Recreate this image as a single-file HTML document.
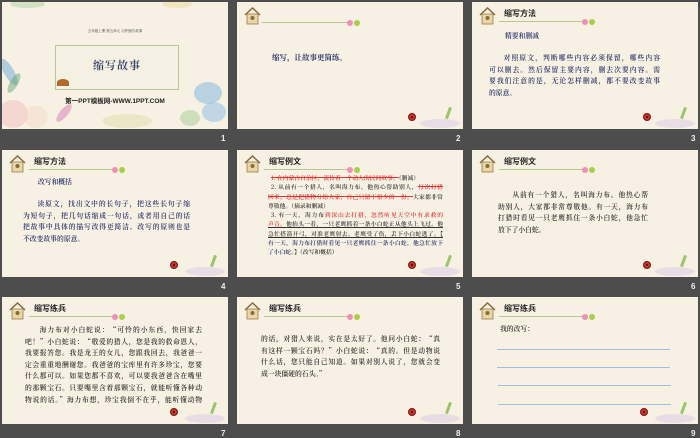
<!DOCTYPE html>
<html><head><meta charset="utf-8">
<style>
*{margin:0;padding:0;box-sizing:border-box}
body{width:700px;height:438px;background:#4d4d4d;position:relative;overflow:hidden;font-family:"Liberation Sans","Noto Serif CJK SC","Noto Sans CJK SC",serif}
.s{position:absolute;width:226px;height:127px;background:#f7f1e3;overflow:hidden}
.n{position:absolute;color:#eee;font:bold 8px "Liberation Sans",sans-serif}
.house{position:absolute;left:7px;top:5px;width:17px;height:18px}
.tt{position:absolute;left:32px;top:6px;font:bold 8px "Liberation Sans","Noto Sans CJK SC",sans-serif;color:#222;white-space:nowrap}
.ln{position:absolute;left:27px;top:19px;width:84px;height:1.2px;background:#b9c98e}
.d1{position:absolute;left:110px;top:16.5px;width:6px;height:6px;border-radius:50%;background:#ef8fb5}
.d2{position:absolute;left:117px;top:16.5px;width:6px;height:6px;border-radius:50%;background:#a9cf4a}
.bug{position:absolute;left:171px;top:111px;width:8px;height:8px;border-radius:50%;background:#c8322a;border:1px solid #7a1a14}
.bug::after{content:"";position:absolute;left:2px;top:2px;width:2px;height:2px;border-radius:50%;background:#300}
.fl{position:absolute;border-radius:50%;opacity:.45}
.dec{position:absolute;left:183px;top:117px;width:40px;height:9px;border-radius:50%;background:#ddd0e4;opacity:.6}
.dec2{position:absolute;left:210px;top:105px;width:3px;height:12px;background:#9cc46a;transform:rotate(20deg)}
.tx{position:absolute;font-size:6.8px;font-weight:600;color:#26306a;font-family:"Noto Serif CJK SC","Noto Sans CJK SC",serif}
.tx div{white-space:nowrap;text-align:justify;text-align-last:justify;height:11.6px;line-height:11.6px}
.tx div.l{text-align-last:left}
</style></head><body>

<!-- Slide 1 -->
<div class="s" style="left:2px;top:2px">
 <div class="fl" style="left:2px;top:55px;width:10px;height:30px;background:#5a9fd0;transform:rotate(-30deg)"></div>
 <div class="fl" style="left:8px;top:70px;width:8px;height:22px;background:#5aa06a;transform:rotate(30deg)"></div>
 <div class="fl" style="left:-4px;top:98px;width:30px;height:28px;background:#f0b8b8"></div>
 <div class="fl" style="left:22px;top:104px;width:24px;height:22px;background:#f0d8c8"></div>
 <div class="fl" style="left:58px;top:100px;width:8px;height:22px;background:#d070b0;transform:rotate(40deg)"></div>
 <div class="fl" style="left:100px;top:112px;width:50px;height:14px;background:#d8dca0"></div>
 <div class="fl" style="left:192px;top:80px;width:28px;height:22px;background:#6aaee0"></div>
 <div class="fl" style="left:200px;top:100px;width:24px;height:20px;background:#7ab8e6"></div>
 <div class="fl" style="left:178px;top:108px;width:20px;height:16px;background:#9cc88a"></div>
 <div class="fl" style="left:8px;top:-2px;width:35px;height:8px;background:#a8cc98"></div>
 <div class="fl" style="left:160px;top:-2px;width:30px;height:8px;background:#e8d890"></div>
 <div style="position:absolute;left:0;width:226px;top:27px;text-align:center;font-size:3.5px;color:#333">五年级上册 第五单元 习作缩写故事</div>
 <div style="position:absolute;left:53px;top:43px;width:124px;height:45px;border:1.5px solid #b8c89a;background:#f4f0e2"></div>
 <div style="position:absolute;left:53px;top:55px;width:124px;text-align:center;font:bold 11px 'Noto Serif CJK SC',serif;color:#3d4a6e;letter-spacing:1px">缩写故事</div>
 <div style="position:absolute;left:55px;top:77px;width:12px;height:7px;border-radius:50% 50% 0 0;background:#b06a2a"></div>
 <div style="position:absolute;left:0;width:226px;top:93px;text-align:center;font:bold 6.5px 'Liberation Sans','Noto Sans CJK SC',sans-serif;color:#222">第一PPT模板网-WWW.1PPT.COM</div>
</div>
<div class="n" style="left:221px;top:134px">1</div>

<!-- Slide 2 -->
<div class="s" style="left:237px;top:2px">
 <svg class="house" viewBox="0 0 17 18"><path d="M1 8 L8.5 1 L16 8" fill="none" stroke="#8a6a3a" stroke-width="1.5"/><rect x="3" y="7" width="11" height="10" fill="#e8d6a6" stroke="#9a7a4a" stroke-width=".8"/><circle cx="8.5" cy="11" r="2" fill="#8a6a3a"/></svg>
 <div class="ln" style="left:25px;top:20px;width:87px"></div><div class="d1" style="top:17.5px"></div><div class="d2" style="top:17.5px"></div>
 <div style="position:absolute;left:35px;top:50px;font:bold 7.5px 'Noto Serif CJK SC',serif;color:#26306a">缩写，让故事更简练。</div>
 <div class="bug"></div><div class="dec"></div><div class="dec2"></div>
</div>
<div class="n" style="left:456px;top:134px">2</div>

<!-- Slide 3 -->
<div class="s" style="left:472px;top:2px">
 <svg class="house" viewBox="0 0 17 18"><path d="M1 8 L8.5 1 L16 8" fill="none" stroke="#8a6a3a" stroke-width="1.5"/><rect x="3" y="7" width="11" height="10" fill="#e8d6a6" stroke="#9a7a4a" stroke-width=".8"/><circle cx="8.5" cy="11" r="2" fill="#8a6a3a"/></svg>
 <div class="tt">缩写方法</div><div class="ln"></div><div class="d1"></div><div class="d2"></div>
 <div class="tx" style="left:33px;top:28px"><div class="l">精要和删减</div></div>
 <div class="tx" style="left:17px;top:50px;width:171px">
  <div>&emsp;&emsp;对照原文，判断哪些内容必须保留，哪些内容</div>
  <div>可以删去。然后保留主要内容，删去次要内容。需</div>
  <div>要我们注意的是，无论怎样删减，都不要改变故事</div>
  <div class="l">的原意。</div>
 </div>
 <div class="bug"></div><div class="dec"></div><div class="dec2"></div>
</div>
<div class="n" style="left:691px;top:134px">3</div>

<!-- Slide 4 -->
<div class="s" style="left:2px;top:150px">
 <svg class="house" viewBox="0 0 17 18"><path d="M1 8 L8.5 1 L16 8" fill="none" stroke="#8a6a3a" stroke-width="1.5"/><rect x="3" y="7" width="11" height="10" fill="#e8d6a6" stroke="#9a7a4a" stroke-width=".8"/><circle cx="8.5" cy="11" r="2" fill="#8a6a3a"/></svg>
 <div class="tt">缩写方法</div><div class="ln"></div><div class="d1"></div><div class="d2"></div>
 <div class="tx" style="left:36px;top:26px"><div class="l">改写和概括</div></div>
 <div class="tx" style="left:21px;top:48px;width:167px">
  <div>&emsp;&emsp;读原文，找出文中的长句子，把这些长句子缩</div>
  <div>为短句子，把几句话缩成一句话，或者用自己的话</div>
  <div>把故事中具体的描写改得更简洁。改写的原则也是</div>
  <div class="l">不改变故事的原意。</div>
 </div>
 <div class="bug" style="left:168px"></div><div class="dec"></div><div class="dec2"></div>
</div>
<div class="n" style="left:221px;top:282px">4</div>

<!-- Slide 5 -->
<div class="s" style="left:237px;top:150px">
 <svg class="house" viewBox="0 0 17 18"><path d="M1 8 L8.5 1 L16 8" fill="none" stroke="#8a6a3a" stroke-width="1.5"/><rect x="3" y="7" width="11" height="10" fill="#e8d6a6" stroke="#9a7a4a" stroke-width=".8"/><circle cx="8.5" cy="11" r="2" fill="#8a6a3a"/></svg>
 <div class="tt">缩写例文</div><div class="ln"></div><div class="d1"></div><div class="d2"></div>
 <div class="tx" style="left:31px;top:23px;width:175px;font-size:5.8px;color:#333">
  <div style="height:9.3px;line-height:9.3px" class="l">&ensp;<span style="color:#d33;text-decoration:line-through">1. 在内蒙古自治区，流传着一个动人的民间故事。</span>（删减）</div>
  <div style="height:9.3px;line-height:9.3px">&ensp;2. 从前有一个猎人，名叫海力布。他热心帮助别人，<span style="color:#d33;text-decoration:line-through">每次打猎</span></div>
  <div style="height:9.3px;line-height:9.3px"><span style="color:#d33;text-decoration:line-through">回来，总是把猎物分给大家，自己只留下很少的一份。</span>大家都非常</div>
  <div style="height:9.3px;line-height:9.3px" class="l">尊敬他。（摘录和删减）</div>
  <div style="height:9.3px;line-height:9.3px">&ensp;3. 有一天，海力布<span style="color:#d33">到深山去打猎，忽然听见天空中有求救的</span></div>
  <div style="height:9.3px;line-height:9.3px;text-decoration:underline"><span style="color:#d33">声音。</span>他抬头一看，一只老鹰抓着一条小白蛇正从他头上飞过。他</div>
  <div style="height:9.3px;line-height:9.3px;text-decoration:underline">急忙搭箭开弓，对准老鹰射去。老鹰受了伤，丢下小白蛇逃了。【</div>
  <div style="height:9.3px;line-height:9.3px;color:#26306a">有一天，海力布打猎时看见一只老鹰抓住一条小白蛇，他急忙放下</div>
  <div style="height:9.3px;line-height:9.3px" class="l"><span style="color:#26306a">了小白蛇。</span>】（改写和概括）</div>
 </div>
 <div class="bug"></div><div class="dec"></div><div class="dec2"></div>
</div>
<div class="n" style="left:456px;top:282px">5</div>

<!-- Slide 6 -->
<div class="s" style="left:472px;top:150px">
 <svg class="house" viewBox="0 0 17 18"><path d="M1 8 L8.5 1 L16 8" fill="none" stroke="#8a6a3a" stroke-width="1.5"/><rect x="3" y="7" width="11" height="10" fill="#e8d6a6" stroke="#9a7a4a" stroke-width=".8"/><circle cx="8.5" cy="11" r="2" fill="#8a6a3a"/></svg>
 <div class="tt">缩写例文</div><div class="ln"></div><div class="d1"></div><div class="d2"></div>
 <div class="tx" style="left:26px;top:39px;width:150px;color:#333">
  <div>&emsp;&emsp;从前有一个猎人，名叫海力布。他热心帮</div>
  <div>助别人，大家都非常尊敬他。有一天，海力布</div>
  <div>打猎时看见一只老鹰抓住一条小白蛇，他急忙</div>
  <div class="l">放下了小白蛇。</div>
 </div>
 <div class="bug"></div><div class="dec"></div><div class="dec2"></div>
</div>
<div class="n" style="left:691px;top:282px">6</div>

<!-- Slide 7 -->
<div class="s" style="left:2px;top:297px">
 <svg class="house" viewBox="0 0 17 18"><path d="M1 8 L8.5 1 L16 8" fill="none" stroke="#8a6a3a" stroke-width="1.5"/><rect x="3" y="7" width="11" height="10" fill="#e8d6a6" stroke="#9a7a4a" stroke-width=".8"/><circle cx="8.5" cy="11" r="2" fill="#8a6a3a"/></svg>
 <div class="tt">缩写练兵</div><div class="ln"></div><div class="d1"></div><div class="d2"></div>
 <div class="tx" style="left:23px;top:27px;width:177px;color:#333">
  <div>&emsp;&emsp;海力布对小白蛇说：“可怜的小东西，快回家去</div>
  <div>吧！”小白蛇说：“敬爱的猎人，您是我的救命恩人，</div>
  <div>我要报答您。我是龙王的女儿，您跟我回去，我爸爸一</div>
  <div>定会重重地酬谢您。我爸爸的宝库里有许多珍宝，您要</div>
  <div>什么都可以。如果您都不喜欢，可以要我爸爸含在嘴里</div>
  <div>的那颗宝石。只要嘴里含着那颗宝石，就能听懂各种动</div>
  <div>物说的话。”海力布想，珍宝我倒不在乎，能听懂动物</div>
 </div>
 <div class="bug" style="left:168px"></div><div class="dec"></div><div class="dec2"></div>
</div>
<div class="n" style="left:221px;top:429px">7</div>

<!-- Slide 8 -->
<div class="s" style="left:237px;top:297px">
 <svg class="house" viewBox="0 0 17 18"><path d="M1 8 L8.5 1 L16 8" fill="none" stroke="#8a6a3a" stroke-width="1.5"/><rect x="3" y="7" width="11" height="10" fill="#e8d6a6" stroke="#9a7a4a" stroke-width=".8"/><circle cx="8.5" cy="11" r="2" fill="#8a6a3a"/></svg>
 <div class="tt">缩写练兵</div><div class="ln"></div><div class="d1"></div><div class="d2"></div>
 <div class="tx" style="left:24px;top:36px;width:179px;color:#333">
  <div>的话，对猎人来说，实在是太好了。他问小白蛇：“真</div>
  <div>有这样一颗宝石吗？”小白蛇说：“真的。但是动物说</div>
  <div>什么话，您只能自己知道。如果对别人说了，您就会变</div>
  <div class="l">成一块僵硬的石头。”</div>
 </div>
 <div class="bug"></div><div class="dec"></div><div class="dec2"></div>
</div>
<div class="n" style="left:456px;top:429px">8</div>

<!-- Slide 9 -->
<div class="s" style="left:472px;top:297px">
 <svg class="house" viewBox="0 0 17 18"><path d="M1 8 L8.5 1 L16 8" fill="none" stroke="#8a6a3a" stroke-width="1.5"/><rect x="3" y="7" width="11" height="10" fill="#e8d6a6" stroke="#9a7a4a" stroke-width=".8"/><circle cx="8.5" cy="11" r="2" fill="#8a6a3a"/></svg>
 <div class="tt">缩写练兵</div><div class="ln"></div><div class="d1"></div><div class="d2"></div>
 <div class="tx" style="left:28px;top:26px;color:#333"><div class="l">我的改写：</div></div>
 <div style="position:absolute;left:25px;top:52px;width:173px;height:1px;background:#9dbfe6"></div>
 <div style="position:absolute;left:25px;top:70px;width:173px;height:1px;background:#9dbfe6"></div>
 <div style="position:absolute;left:26px;top:88px;width:173px;height:1px;background:#9dbfe6"></div>
 <div style="position:absolute;left:26px;top:107px;width:173px;height:1px;background:#9dbfe6"></div>
 <div class="bug" style="left:168px"></div><div class="dec"></div><div class="dec2"></div>
</div>
<div class="n" style="left:691px;top:429px">9</div>

</body></html>
